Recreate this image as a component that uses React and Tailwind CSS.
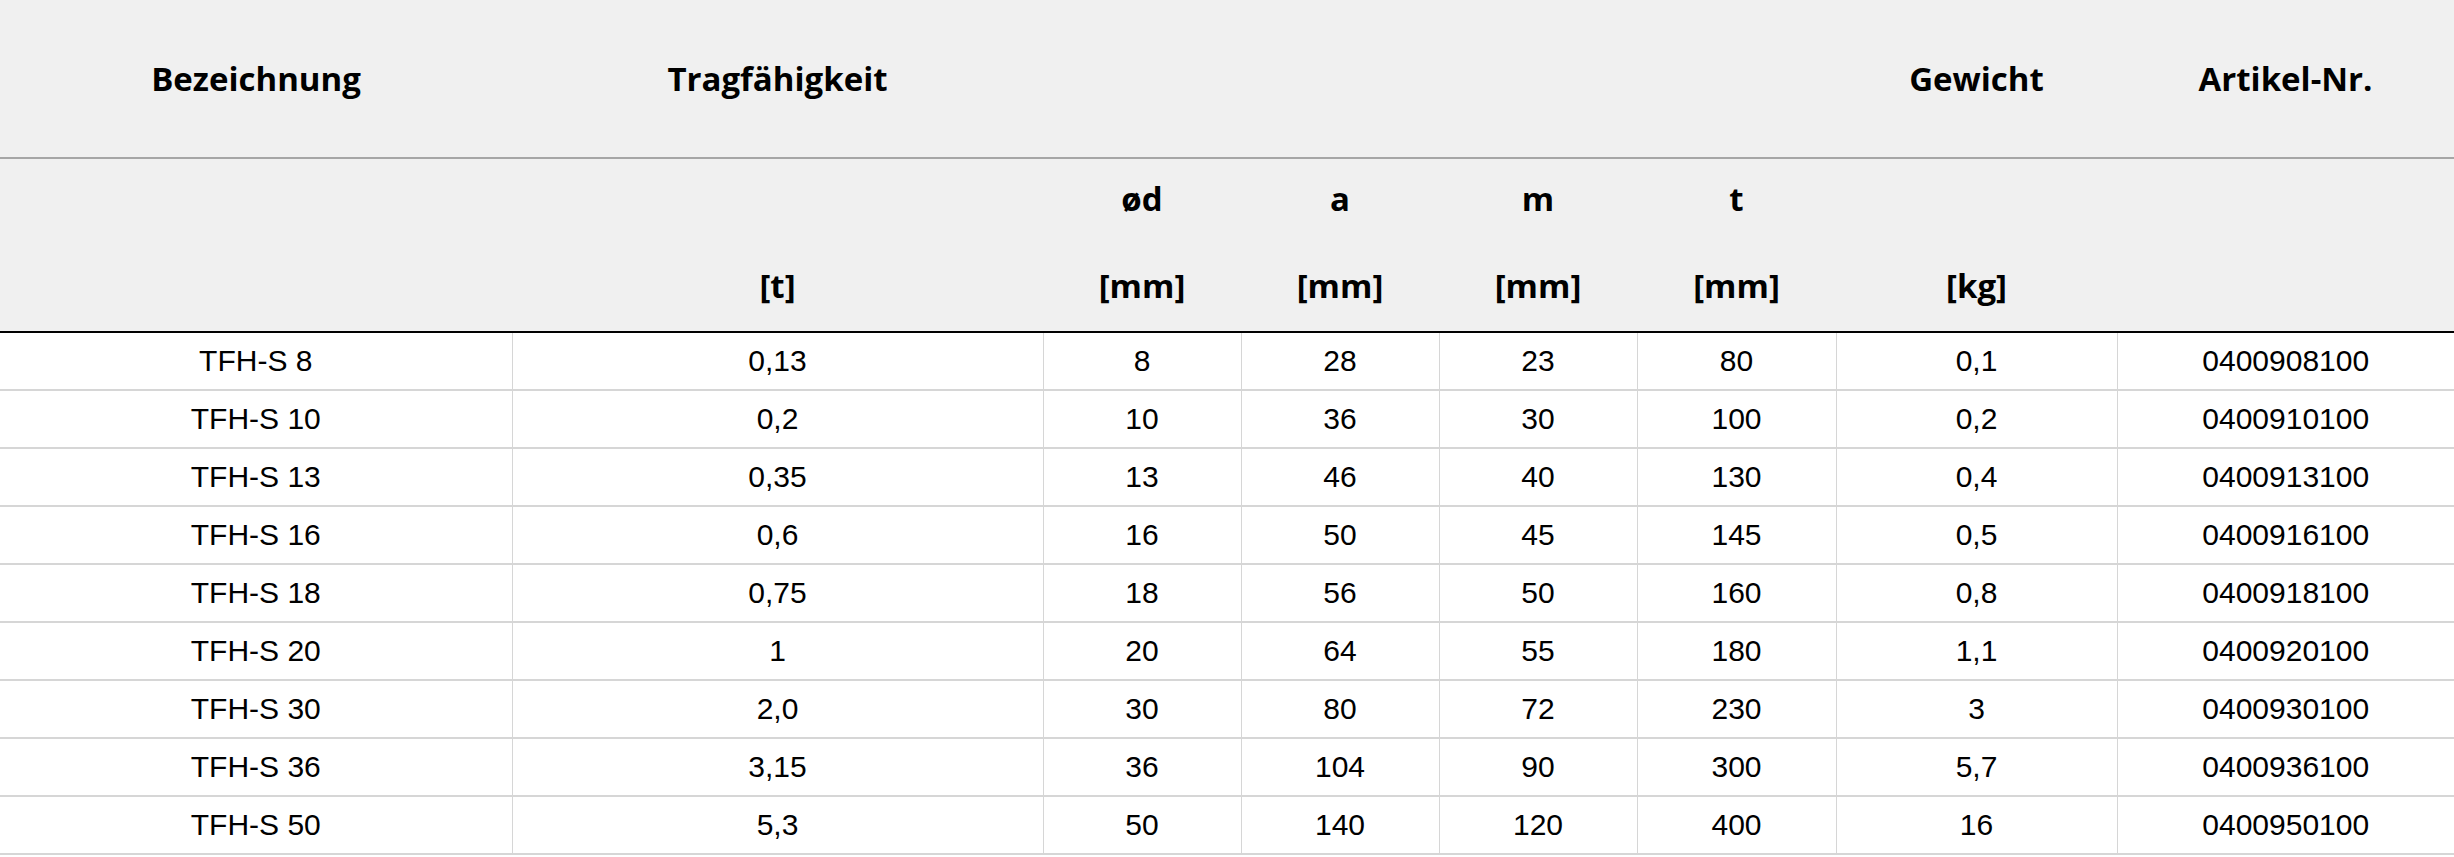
import React from "react";

const rows = [
  ["TFH-S 8", "0,13", "8", "28", "23", "80", "0,1", "0400908100"],
  ["TFH-S 10", "0,2", "10", "36", "30", "100", "0,2", "0400910100"],
  ["TFH-S 13", "0,35", "13", "46", "40", "130", "0,4", "0400913100"],
  ["TFH-S 16", "0,6", "16", "50", "45", "145", "0,5", "0400916100"],
  ["TFH-S 18", "0,75", "18", "56", "50", "160", "0,8", "0400918100"],
  ["TFH-S 20", "1", "20", "64", "55", "180", "1,1", "0400920100"],
  ["TFH-S 30", "2,0", "30", "80", "72", "230", "3", "0400930100"],
  ["TFH-S 36", "3,15", "36", "104", "90", "300", "5,7", "0400936100"],
  ["TFH-S 50", "5,3", "50", "140", "120", "400", "16", "0400950100"],
];

// second header row: label on top, unit below
const subHeads = [
  ["", ""],
  ["", "[t]"],
  ["ød", "[mm]"],
  ["a", "[mm]"],
  ["m", "[mm]"],
  ["t", "[mm]"],
  ["", "[kg]"],
  ["", ""],
];

const widths = [512, 531, 198, 198, 198, 199, 281, 337];

export default function App() {
  return (
    <div className="w-[2454px] min-h-[857px] bg-white">
      <table className="w-[2454px] table-fixed border-collapse text-black">
        <colgroup>
          {widths.map((w, i) => (
            <col key={i} style={{ width: w }} />
          ))}
        </colgroup>
        <thead className="bg-[#f0f0f0] font-['Open_Sans',sans-serif] text-[33px] font-bold leading-[44px]">
          <tr className="h-[158px] border-b-2 border-[#a6a6a6]">
            <th className="p-0 text-center align-middle font-bold">Bezeichnung</th>
            <th className="p-0 text-center align-middle font-bold">Tragfähigkeit</th>
            <th className="p-0" />
            <th className="p-0" />
            <th className="p-0" />
            <th className="p-0" />
            <th className="p-0 text-center align-middle font-bold">Gewicht</th>
            <th className="p-0 text-center align-middle font-bold">Artikel-Nr.</th>
          </tr>
          <tr className="border-b-2 border-black">
            {subHeads.map(([label, unit], i) => (
              <th key={i} className="p-0 text-center align-top font-bold">
                <div className="flex flex-col items-center gap-[43px] pt-[18px] pb-[23px]">
                  <span className="h-[44px]">{label}</span>
                  <span className="h-[44px]">{unit}</span>
                </div>
              </th>
            ))}
          </tr>
        </thead>
        <tbody className="font-['Liberation_Sans',Arial,sans-serif] text-[30px] leading-[34px]">
          {rows.map((row) => (
            <tr key={row[0]} className="h-[58px] border-b-2 border-[#d6d6d6]">
              {row.map((cell, i) => (
                <td
                  key={i}
                  className={
                    i < row.length - 1
                      ? "p-0 text-center align-middle border-r border-[#d6d6d6]"
                      : "p-0 text-center align-middle"
                  }
                >
                  {cell}
                </td>
              ))}
            </tr>
          ))}
        </tbody>
      </table>
    </div>
  );
}
